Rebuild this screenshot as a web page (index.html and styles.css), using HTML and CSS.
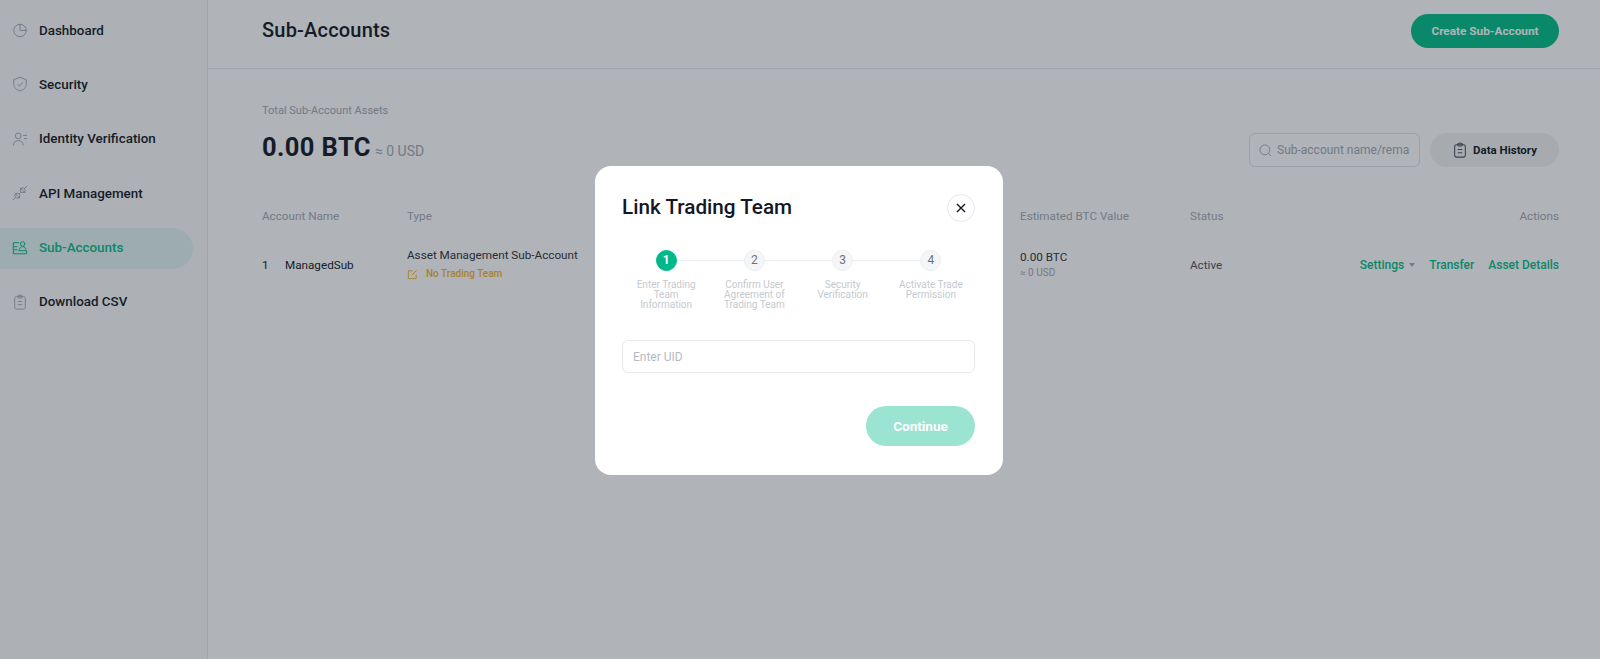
FILE: index.html
```html
<!DOCTYPE html>
<html lang="en">

<head>
    <meta charset="UTF-8">
    <title>Sub-Accounts</title>
    <link rel="stylesheet" href="styles.css">
</head>

<body>
    <div class="layout">
        <aside class="sidebar">
            <a class="nav-item">
                <svg class="nav-icon" viewBox="0 0 18 18"><circle cx="9" cy="9.500" r="7"/><path d="M9 2.500v7h7"/></svg>
                Dashboard
            </a>
            <a class="nav-item">
                <svg class="nav-icon" viewBox="0 0 18 18"><path d="M9 1.500l7 2.500v5.500c0 3.600-3 6.200-7 7.200-4-1-7-3.600-7-7.200V4z"/><path d="M6 9l2.300 2.300L12.300 7"/></svg>
                Security
            </a>
            <a class="nav-item">
                <svg class="nav-icon" viewBox="0 0 18 18"><circle cx="7" cy="5.500" r="3.200"/><path d="M1.500 16c0-3.400 2.400-5.200 5.500-5.200s5.500 1.800 5.500 5.200"/><path d="M12.500 5h4.500M13.500 8.500h3.500"/></svg>
                Identity Verification
            </a>
            <a class="nav-item">
                <svg class="nav-icon" viewBox="0 0 18 18"><circle cx="6" cy="12" r="2.800"/><circle cx="12" cy="6" r="2.800"/><path d="M8 10l2-2M1 17l3-3M14 4l3-3M3 9l6 6M9 3l6 6"/></svg>
                API Management
            </a>
            <a class="nav-item active">
                <svg class="nav-icon" viewBox="0 0 18 18"><path d="M8 3H1.500v12.500h15v-3.500H7"/><path d="M1.500 7.500h4.500M1.500 11H6"/><circle cx="12" cy="4.500" r="2.500"/><path d="M8.500 11c0-2.500 1.500-3.500 3.500-3.500s3.500 1 3.500 3.500"/></svg>
                Sub-Accounts
            </a>
            <a class="nav-item">
                <svg class="nav-icon" viewBox="0 0 18 18"><rect x="3" y="3" width="12" height="14" rx="2"/><rect x="6.500" y="1.500" width="5" height="3" rx="1"/><path d="M6.500 8.500h5M6.500 12h5"/></svg>
                Download CSV
            </a>
        </aside>

        <main class="main">
            <header class="top-bar">
                <h1>Sub-Accounts</h1>
                <button class="create-btn">Create Sub-Account</button>
            </header>

            <div class="content">
                <div class="total-label">Total Sub-Account Assets</div>
                <div class="summary">
                    <div class="total">
                        <span class="total-btc">0.00 BTC</span>
                        <span class="total-usd">≈ 0 USD</span>
                    </div>
                    <div class="tools">
                        <div class="search">
                            <svg class="search-icon" viewBox="0 0 14 14"><circle cx="6.300" cy="6.300" r="5.300"/><path d="M10.200 10.200L13 13"/></svg>
                            <input class="search-input" type="text" placeholder="Sub-account name/remark">
                        </div>
                        <button class="history-btn">
                            <svg class="history-icon" viewBox="0 0 18 18"><rect x="3" y="3" width="12" height="14" rx="2"/><rect x="6.500" y="1.500" width="5" height="3" rx="1"/><path d="M6.500 8.500h5M6.500 12h5"/></svg>
                            Data History
                        </button>
                    </div>
                </div>

                <div class="table-row table-head">
                    <div>Account Name</div>
                    <div>Type</div>
                    <div></div>
                    <div>Estimated BTC Value</div>
                    <div>Status</div>
                    <div class="actions">Actions</div>
                </div>
                <div class="table-row table-body">
                    <div class="account"><span class="account-no">1</span>ManagedSub</div>
                    <div>
                        <div>Asset Management Sub-Account</div>
                        <div class="team">
                            <svg class="team-icon" viewBox="0 0 12 12"><path d="M6 2H1.500v8.500H10V6"/><path d="M5 7l5.500-5.500"/></svg>
                            No Trading Team
                        </div>
                    </div>
                    <div></div>
                    <div>
                        <div>0.00 BTC</div>
                        <div class="muted-usd">≈ 0 USD</div>
                    </div>
                    <div class="status">Active</div>
                    <div class="actions links">
                        <a>Settings<span class="caret"></span></a>
                        <a>Transfer</a>
                        <a>Asset Details</a>
                    </div>
                </div>
            </div>
        </main>
    </div>

    <div class="overlay">
        <div class="modal">
            <div class="modal-head">
                <h2>Link Trading Team</h2>
                <button class="close-btn">
                    <svg viewBox="0 0 10 10"><path d="M1 1l8 8M9 1l-8 8"/></svg>
                </button>
            </div>

            <div class="steps">
                <div class="step current">
                    <span class="step-no">1</span>
                    <span class="step-label">Enter Trading Team Information</span>
                </div>
                <div class="step">
                    <span class="step-no">2</span>
                    <span class="step-label">Confirm User Agreement of Trading Team</span>
                </div>
                <div class="step">
                    <span class="step-no">3</span>
                    <span class="step-label">Security Verification</span>
                </div>
                <div class="step">
                    <span class="step-no">4</span>
                    <span class="step-label">Activate Trade Permission</span>
                </div>
            </div>

            <input class="uid-input" type="text" placeholder="Enter UID">

            <div class="modal-foot">
                <button class="continue-btn">Continue</button>
            </div>
        </div>
    </div>
</body>

</html>
```

FILE: styles.css
```css
* {
    margin: 0;
    padding: 0;
    box-sizing: border-box;
    font-family: 'Roboto', 'Liberation Sans', sans-serif;
}

body {
    background: #fff;
    color: #121826;
    height: 659px;
    overflow: hidden;
}

button {
    border: none;
    cursor: pointer;
}

.layout {
    display: flex;
    height: 659px;
}

/* Sidebar */
.sidebar {
    width: 208px;
    flex-shrink: 0;
    border-right: 1px solid #e6e8ec;
    background: #fbfbfc;
    padding-top: 10px;
    display: flex;
    flex-direction: column;
    gap: 13.400px;
}

.nav-item {
    display: flex;
    align-items: center;
    gap: 11px;
    width: 193px;
    height: 41px;
    padding: 0 0 1px 12px;
    font-size: 13.400px;
    font-weight: 500;
    border-radius: 0 21px 21px 0;
}

.nav-item.active {
    color: #00bd89;
    background: #e2f5f2;
}

.nav-icon {
    width: 16px;
    height: 16px;
    fill: none;
    stroke: #a3a9b5;
    stroke-width: 1.100;
    flex-shrink: 0;
}

.active .nav-icon {
    stroke: #00bd89;
}

/* Header */
.main {
    flex: 1;
    min-width: 0;
}

.top-bar {
    height: 69px;
    border-bottom: 1px solid #e6e8ec;
    padding: 14px 41px 0 54px;
    display: flex;
    justify-content: space-between;
    align-items: flex-start;
}

.top-bar h1 {
    font-size: 20px;
    font-weight: 500;
    line-height: 32px;
    letter-spacing: 0.2px;
}

.create-btn {
    width: 148px;
    height: 34px;
    border-radius: 17px;
    background: #00bd89;
    color: #fff;
    font-size: 11.800px;
    font-weight: 700;
}

/* Content */
.content {
    padding: 35px 41px 0 54px;
}

.total-label {
    font-size: 11px;
    line-height: 14px;
    color: #a3a9b5;
}

.summary {
    display: flex;
    justify-content: space-between;
    align-items: center;
    margin-top: 14px;
}

.total {
    padding-bottom: 6px;
}

.total-btc {
    font-size: 25.500px;
    font-weight: 700;
    letter-spacing: 0.4px;
}

.total-usd {
    font-size: 14px;
    color: #a3a9b5;
}

.tools {
    display: flex;
    gap: 10px;
}

.search {
    width: 171px;
    height: 34px;
    border: 1px solid #dfe2e7;
    border-radius: 6px;
    display: flex;
    align-items: center;
    padding: 0 9px;
    gap: 5px;
    overflow: hidden;
}

.search-icon {
    width: 13px;
    height: 13px;
    fill: none;
    stroke: #a3a9b5;
    flex-shrink: 0;
}

.search-input {
    flex: 1;
    min-width: 0;
    border: none;
    outline: none;
    background: none;
    font-size: 12px;
}

.search-input::placeholder {
    color: #a3a9b5;
}

.history-btn {
    width: 129px;
    height: 34px;
    border-radius: 17px;
    background: #f2f3f5;
    color: #121826;
    font-size: 11.500px;
    font-weight: 700;
    display: flex;
    align-items: center;
    justify-content: center;
    gap: 5px;
}

.history-icon {
    width: 16px;
    height: 16px;
    fill: none;
    stroke: #4a5160;
    stroke-width: 1.200;
}

/* Table */
.table-row {
    display: grid;
    grid-template-columns: 145px 423px 190px 170px 130px 1fr;
    align-items: center;
    font-size: 11.700px;
}

.table-head {
    margin-top: 41px;
    color: #a3a9b5;
    line-height: 14px;
}

.table-body {
    margin-top: 24px;
    line-height: 16px;
    color: #2c3240;
}

.status {
    color: #4a5160;
}

.actions {
    text-align: right;
    white-space: nowrap;
}

.account {
    color: #121826;
}

.account-no {
    display: inline-block;
    width: 23px;
}

.team {
    display: flex;
    align-items: center;
    gap: 8px;
    font-size: 10px;
    font-weight: 500;
    color: #f0b429;
    margin-top: 3px;
}

.team-icon {
    width: 11px;
    height: 11px;
    fill: none;
    stroke: #f0b429;
}

.muted-usd {
    font-size: 10px;
    color: #a3a9b5;
}

.links {
    color: #00bd89;
    font-size: 12px;
    font-weight: 500;
    justify-self: end;
    display: flex;
    gap: 14px;
}

.caret {
    display: inline-block;
    border: 3px solid transparent;
    border-top: 4px solid #a3a9b5;
    border-bottom: none;
    margin-left: 5px;
    vertical-align: middle;
}

/* Modal */
.overlay {
    position: fixed;
    top: 0;
    left: 0;
    right: 0;
    bottom: 0;
    background: rgba(29, 37, 50, 0.35);
    display: flex;
    align-items: center;
    justify-content: center;
    padding-bottom: 18px;
    padding-right: 2px;
}

.modal {
    width: 408px;
    height: 309px;
    background: #fff;
    border-radius: 16px;
    padding: 28px 28px 28px 27px;
}

.modal-head {
    display: flex;
    justify-content: space-between;
    align-items: flex-start;
}

.modal-head h2 {
    font-size: 20.700px;
    font-weight: 500;
    line-height: 26px;
    color: #121826;
}

.close-btn {
    width: 28px;
    height: 28px;
    border-radius: 50%;
    background: #fff;
    border: 1px solid #e6e8ec;
    display: flex;
    align-items: center;
    justify-content: center;
}

.close-btn svg {
    width: 10px;
    height: 10px;
    fill: none;
    stroke: #121826;
    stroke-width: 1.400;
}

.steps {
    display: grid;
    grid-template-columns: repeat(4, 1fr);
    margin-top: 28px;
}

.step {
    display: flex;
    flex-direction: column;
    align-items: center;
    position: relative;
    text-align: center;
}

.step:not(:last-child)::after {
    content: "";
    position: absolute;
    top: 10px;
    left: 50%;
    width: 100%;
    height: 1px;
    background: #eceef1;
}

.step-no {
    width: 21px;
    height: 21px;
    border-radius: 50%;
    background: #f5f6f8;
    border: 1px solid #eceef1;
    color: #6b7280;
    font-size: 12px;
    line-height: 19px;
    position: relative;
    z-index: 1;
}

.current .step-no {
    background: #00b98a;
    border-color: #00b98a;
    color: #fff;
    font-weight: 700;
}

.step-label {
    font-size: 10px;
    line-height: 10px;
    color: #c5c9d0;
    margin-top: 9px;
    padding: 0 12px;
}

.uid-input {
    display: block;
    width: 100%;
    height: 33px;
    margin-top: 30px;
    border: 1px solid #e6e8ec;
    border-radius: 6px;
    padding: 0 10px;
    font-size: 12px;
}

.uid-input::placeholder {
    color: #b5bac3;
}

.modal-foot {
    display: flex;
    justify-content: flex-end;
    margin-top: 33px;
}

.continue-btn {
    width: 109px;
    height: 40px;
    border-radius: 20px;
    background: #9ae4d1;
    color: #fff;
    font-size: 13.500px;
    font-weight: 700;
}
```
